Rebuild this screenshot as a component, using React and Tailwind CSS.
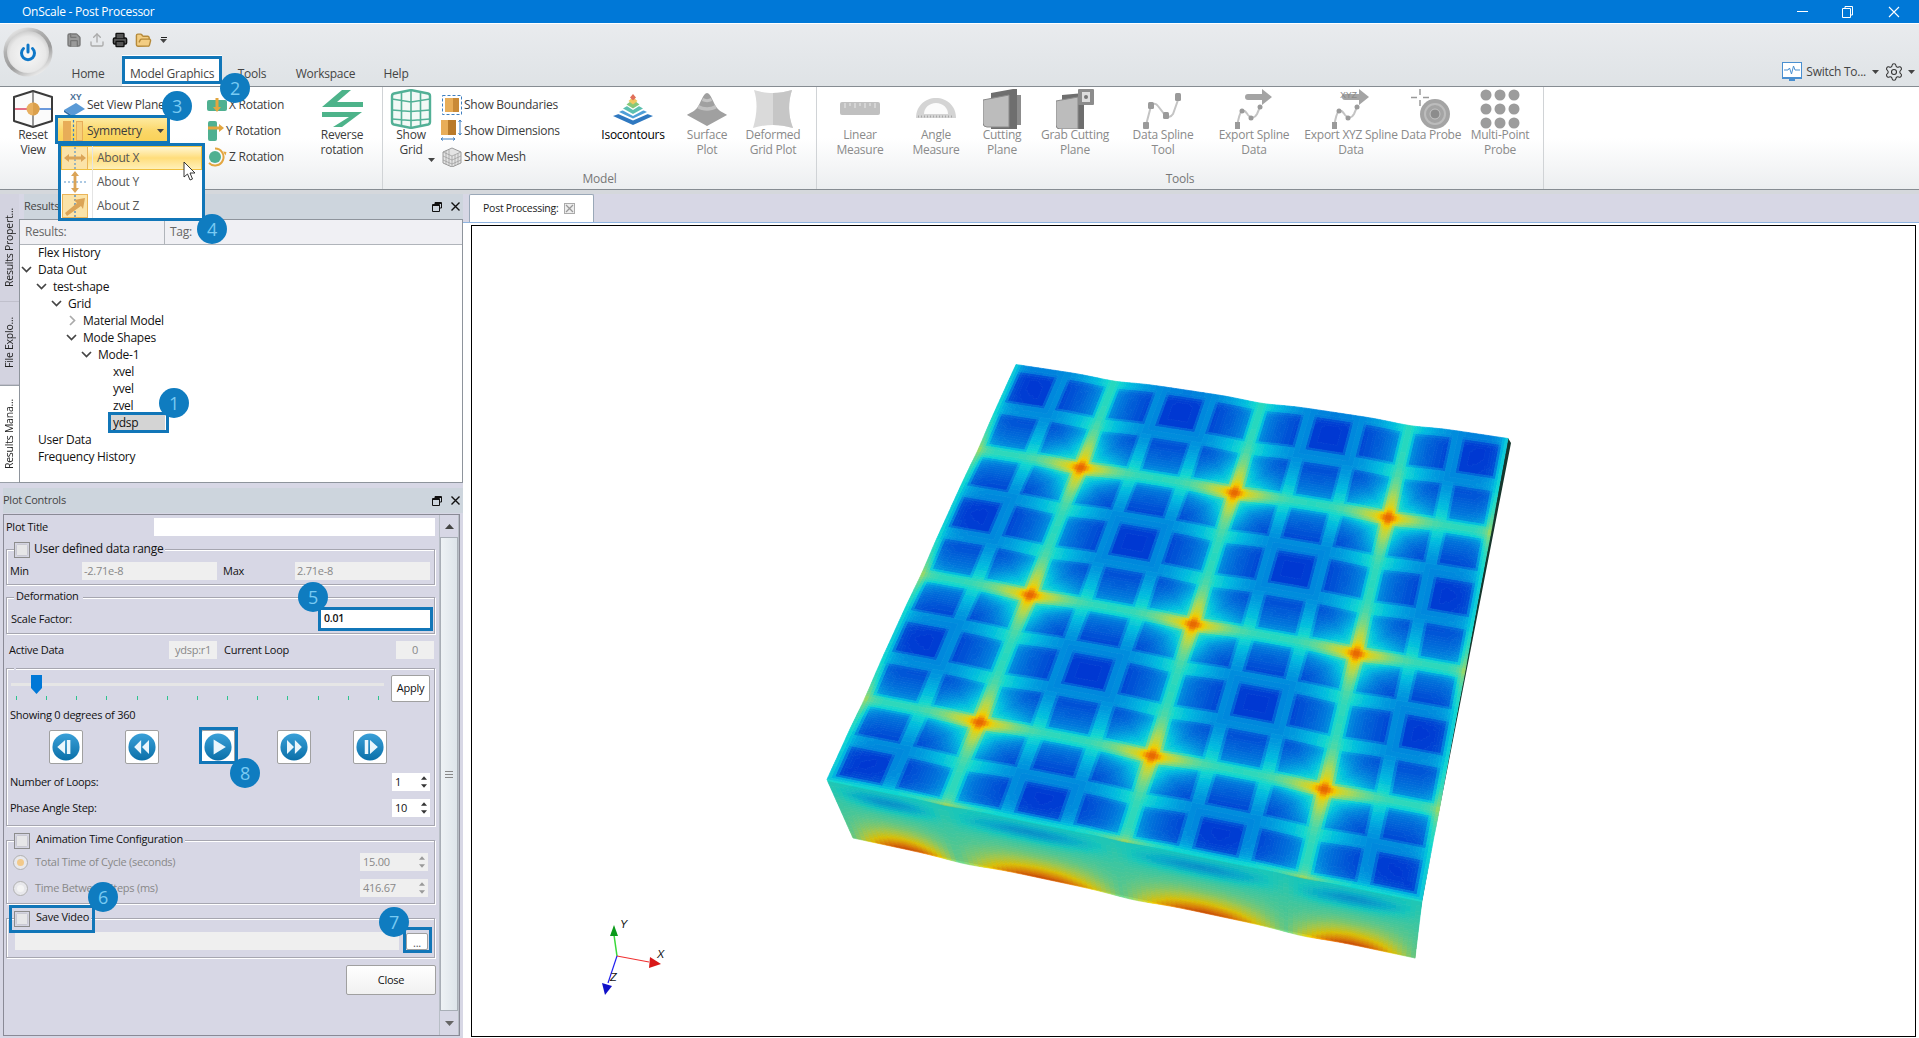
import React, { useMemo } from "react";
import { Save, Upload, Printer, FolderOpen, Settings } from "lucide-react";

/* ---------- small helpers ---------- */

const Caret = ({ className = "" }) => (
  <svg width="7" height="4" viewBox="0 0 7 4" className={className}>
    <path d="M0 0h7L3.500 4z" fill="#444" />
  </svg>
);

/* ---------- ribbon icons ---------- */

const PowerOrb = () => (
  <svg width="50" height="50" viewBox="0 0 50 50">
    <defs>
      <linearGradient id="orbRing" x1="0.1" y1="0" x2="0.7" y2="1">
        <stop offset="0" stopColor="#fafafa" />
        <stop offset="0.35" stopColor="#b0b0b0" />
        <stop offset="0.65" stopColor="#9a9a9a" />
        <stop offset="1" stopColor="#f2f2f2" />
      </linearGradient>
      <radialGradient id="orbFace" cx="0.5" cy="0.55" r="0.6">
        <stop offset="0" stopColor="#f8f8f8" />
        <stop offset="0.7" stopColor="#e8e8e8" />
        <stop offset="1" stopColor="#c4c4c4" />
      </radialGradient>
    </defs>
    <circle cx="25" cy="25" r="24.500" fill="url(#orbRing)" />
    <circle cx="25" cy="25" r="21" fill="url(#orbFace)" />
    <path d="M20.500 21.500a6.500 6.500 0 1 0 9 0" fill="none" stroke="#1078c8" strokeWidth="3" strokeLinecap="round" />
    <path d="M25 18v7" stroke="#1078c8" strokeWidth="3" strokeLinecap="round" />
  </svg>
);

const ResetViewIcon = () => (
  <svg width="42" height="38" viewBox="0 0 42 38">
    <path d="M2 7 21 1l19 6v24l-19 6-19-6z" fill="#fbfbfb" stroke="#3a3a3a" strokeWidth="2" strokeLinejoin="round" />
    <path d="M21 1v36" stroke="#555" strokeWidth="1.200" />
    <path d="M3 19h14" stroke="#e0607a" strokeWidth="1.800" />
    <path d="M25 19h14" stroke="#5a8ed8" strokeWidth="1.800" />
    <circle cx="21" cy="19" r="6.500" fill="#e8b060" />
    <path d="M21 12.500a6.500 6.500 0 0 1 0 13z" fill="#dba04c" />
  </svg>
);

const ViewPlaneIcon = () => (
  <svg width="24" height="26" viewBox="0 0 24 26">
    <text x="7" y="8" fontSize="9" fontWeight="700" fill="#4a6f96" fontFamily="Liberation Sans, sans-serif">XY</text>
    <path d="M1 18 13 11l9 6-12 7z" fill="#5a9ad6" />
    <path d="M1 18l9 6v2l-9-6z" fill="#2f6ca8" />
  </svg>
);

const SymmetryIcon = () => (
  <svg width="20" height="24" viewBox="0 0 20 24">
    <rect x="0" y="2" width="8" height="20" fill="#e8ad58" />
    <rect x="13.500" y="2.500" width="6" height="19" fill="#f6cf7a" stroke="#e8ad58" />
    <path d="M10.500 1v22" stroke="#3a7fc0" strokeWidth="1.200" strokeDasharray="2.500 2" />
  </svg>
);

const ArrowsX = () => (
  <svg width="24" height="22" viewBox="0 0 24 22">
    <path d="M12 0v22" stroke="#5a94c8" strokeWidth="1.200" strokeDasharray="2 2" />
    <path d="M1 11l5-4v2.600h12V7l5 4-5 4v-2.600H6V15z" fill="#dba457" />
  </svg>
);

const ArrowsY = () => (
  <svg width="24" height="22" viewBox="0 0 24 22">
    <path d="M1 11h22" stroke="#5a94c8" strokeWidth="1.200" strokeDasharray="2 2" />
    <path d="M12 0l4 5h-2.600v12H16l-4 5-4-5h2.600V5H8z" fill="#dba457" />
  </svg>
);

const ArrowsZ = () => (
  <svg width="22" height="22" viewBox="0 0 22 22">
    <path d="M11 0v22" stroke="#3a7fc0" strokeWidth="1.200" strokeDasharray="2 2" />
    <path d="M1 18l2 3 14-10 2 3 2-11-11 2 3 3z" fill="#dba457" />
  </svg>
);

const RotX = () => (
  <svg width="20" height="20" viewBox="0 0 20 20">
    <rect x="0" y="5" width="20" height="11" rx="2" fill="#4fb091" />
    <path d="M10 17l-4-5h2.500V3h3v9H14z" fill="#e3a63f" />
  </svg>
);

const RotY = () => (
  <svg width="18" height="22" viewBox="0 0 18 22">
    <rect x="1" y="1" width="9" height="20" rx="2" fill="#4fb091" />
    <path d="M17 8l-5 4V9.500H1v-3h11V4z" fill="#e3a63f" />
  </svg>
);

const RotZ = () => (
  <svg width="20" height="20" viewBox="0 0 20 20">
    <circle cx="8" cy="10" r="6" fill="#4fb091" />
    <path d="M8 1.500a8.500 8.500 0 1 1-6 14.500" fill="none" stroke="#e3a63f" strokeWidth="2" />
    <path d="M16 4.500l3.500.5-1 3.500z" fill="#e3a63f" />
  </svg>
);

const ReverseIcon = () => (
  <svg width="42" height="38" viewBox="0 0 42 38">
    <path d="M21 0h9L16 12h26v5H1z" fill="#4db38a" />
    <path d="M1 22h40L21 37h-9l16-10H1z" fill="#4db38a" />
  </svg>
);

const ShowGridIcon = () => (
  <svg width="42" height="40" viewBox="0 0 42 40">
    <path d="M2 7Q2 5 4 4.500L21 1l17 3.500Q40 5 40 7v26q0 2-2 2.500L21 39 4 35.500Q2 35 2 33z" fill="#f2f9f6" stroke="#52b096" strokeWidth="2.400" />
    <path d="M21 1v38M2 10l19 3 19-3M2 21l19 1.500L40 21M2 30l19 1.500L40 30M11.500 4v32M30.500 4v32" fill="none" stroke="#52b096" strokeWidth="1.600" />
  </svg>
);

const BoundariesIcon = () => (
  <svg width="20" height="20" viewBox="0 0 20 20">
    <rect x="0.500" y="0.500" width="19" height="19" fill="none" stroke="#3f7fc0" strokeDasharray="3 2" />
    <rect x="3" y="3" width="14" height="14" fill="#e8ad58" />
    <rect x="11" y="3" width="6" height="14" fill="#c98a38" />
  </svg>
);

const DimensionsIcon = () => (
  <svg width="22" height="22" viewBox="0 0 22 22">
    <rect x="0" y="0" width="15" height="15" fill="#e8ad58" />
    <rect x="7" y="0" width="8" height="15" fill="#b97a2a" />
    <path d="M19 0v15M17.500 2 19 0l1.500 2M17.500 13l1.500 2 1.500-2M0 19h14M2 17.500 0 19l2 1.500M12 17.500l2 1.500-2 1.500" fill="none" stroke="#3f7fc0" strokeWidth="1" />
  </svg>
);

const MeshIcon = () => (
  <svg width="20" height="20" viewBox="0 0 20 20">
    <path d="M1 5 10 1l9 4v11l-9 4-9-4z" fill="#e4e4e4" stroke="#9a9a9a" />
    <path d="M10 9v11M1 5l9 4 9-4M4 3.800v13.500M7 2.500v16.200M13 7.800v11M16 6.300v11M1 9l9 4 9-4M1 13l9 4 9-4" fill="none" stroke="#9a9a9a" strokeWidth="0.700" />
  </svg>
);

const IsoIcon = () => (
  <svg width="42" height="32" viewBox="0 0 42 32">
    <path d="M1 23 21 16l20 7-20 9z" fill="#2f78c0" />
    <path d="M5 20.500 21 14l16 6.500-16 7z" fill="#fff" />
    <path d="M7 19 21 12.500 35 19l-14 6.500z" fill="#4f9fd8" />
    <path d="M10 17 21 11l11 6-11 6z" fill="#fff" />
    <path d="M11 15.500 21 9.500l10 6-10 5.500z" fill="#5cc0b0" />
    <path d="M14 12.500 21 8l7 4.500-7 4.500z" fill="#fff" />
    <path d="M14.500 11.500 21 6.500l6.500 5-6.500 4z" fill="#86c878" />
    <path d="M16.500 8 21 4l4.500 4-4.500 3.500z" fill="#f0c860" />
    <path d="M18 4.500 21 1l3 3.500-3 3z" fill="#e0705a" />
  </svg>
);

const SurfaceIcon = () => (
  <svg width="42" height="34" viewBox="0 0 42 34">
    <path d="M21 1C17 1 15 11 11 16 8 20 3 21 1 23l20 11 20-11c-2-2-7-3-10-7C27 11 25 1 21 1z" fill="#a0a0a0" />
    <path d="M13 13c5 3 11 3 16 0l2 3c-6 3.500-14 3.500-20 0z" fill="#c0c0c0" />
    <path d="M17 6c3 1.500 5 1.500 8 0l1 3c-3 1.500-7 1.500-10 0z" fill="#c4c4c4" />
  </svg>
);

const DeformedIcon = () => (
  <svg width="40" height="38" viewBox="0 0 40 38">
    <path d="M1 0C8 2 13 3 20 3s12-1 19-3c-4 12-4 25 1 38-7-2-13-3-20-3S7 36 0 38C4 25 5 12 1 0z" fill="#dadada" />
    <path d="M20 3c7 0 12-1 19-3-4 12-4 25 1 38-7-2-13-3-20-3z" fill="#c6c6c6" />
  </svg>
);

const LinearIcon = () => (
  <svg width="40" height="38" viewBox="0 0 40 38">
    <rect x="0" y="12" width="40" height="13" rx="2" fill="#c0c0c0" />
    <path d="M5 13v5M10 13v3M15 13v5M20 13v3M25 13v5M30 13v3M35 13v5" stroke="#dcdcdc" strokeWidth="1.500" />
  </svg>
);

const AngleIcon = () => (
  <svg width="40" height="38" viewBox="0 0 40 38">
    <path d="M0 28C0 16 9 8 20 8s20 8 20 20z" fill="#d4d4d4" />
    <path d="M8 24c0-6 5-11 12-11s12 5 12 11z" fill="#fbfbfb" />
    <path d="M2 26.500h36" stroke="#a8a8a8" strokeWidth="2" strokeDasharray="1 2" />
  </svg>
);

const CuttingIcon = () => (
  <svg width="38" height="40" viewBox="0 0 38 40">
    <path d="M8 4 30 0h4v40H8z" fill="#6e6e6e" />
    <path d="M34 6h4v30h-4z" fill="#8c8c8c" />
    <path d="M0 11 26 6v32H4a4 4 0 0 1-4-4z" fill="#bcbcbc" stroke="#8a8a8a" />
  </svg>
);

const GrabIcon = () => (
  <svg width="38" height="40" viewBox="0 0 38 40">
    <path d="M6 6 28 4v36H6z" fill="#6e6e6e" />
    <path d="M0 12 22 8v32H4a4 4 0 0 1-4-4z" fill="#bcbcbc" stroke="#8a8a8a" />
    <rect x="22" y="0" width="16" height="16" rx="1" fill="#8c8c8c" />
    <rect x="26" y="3" width="8" height="10" fill="#ddd" />
    <circle cx="30" cy="8" r="2" fill="#777" />
  </svg>
);

const SplineIcon = () => (
  <svg width="40" height="40" viewBox="0 0 40 40">
    <path d="M3 36 8 17c2-3 5-3 7 0l7 9c3 3 6 2 8-1l5-14" fill="none" stroke="#c4c4c4" strokeWidth="2" />
    <rect x="0" y="33" width="6" height="7" rx="1" fill="#9a9a9a" />
    <rect x="5" y="13" width="6" height="7" rx="1.500" fill="#9a9a9a" />
    <rect x="20" y="23" width="6" height="7" rx="1.500" fill="#9a9a9a" />
    <rect x="32" y="4" width="6" height="8" rx="1.500" fill="#9a9a9a" />
  </svg>
);

const ExportSplineIcon = ({ xyz }) => (
  <svg width="40" height="40" viewBox="0 0 40 40">
    <path d="M3 36c2-6 2-12 5-14 3-1 4 1 6 4 3 4 7 3 9-1l3-7" fill="none" stroke="#c4c4c4" strokeWidth="2" />
    <rect x="1" y="33" width="5" height="7" fill="#9a9a9a" />
    <circle cx="8" cy="22" r="2.500" fill="#9a9a9a" />
    <circle cx="17" cy="29" r="2.500" fill="#9a9a9a" />
    <circle cx="26" cy="18" r="2.500" fill="#9a9a9a" />
    <path d="M14 5h14V0l10 8-10 8v-5H14a3 3 0 0 1 0-6z" fill="#a4a4a4" />
    {xyz && (
      <text x="9" y="9" fontSize="9" fill="#8a8a8a" fontFamily="Liberation Sans, sans-serif">XYZ</text>
    )}
  </svg>
);

const ProbeIcon = () => (
  <svg width="40" height="40" viewBox="0 0 40 40">
    <path d="M9 0v6M9 11v6M0 8.500h6M12 8.500h6" stroke="#9a9a9a" strokeWidth="1.500" />
    <circle cx="24" cy="25" r="15" fill="#a4a4a4" />
    <circle cx="24" cy="25" r="10" fill="none" stroke="#bcbcbc" strokeWidth="2" />
    <circle cx="24" cy="25" r="5" fill="#8c8c8c" stroke="#c4c4c4" />
  </svg>
);

const MultiPointIcon = () => (
  <svg width="40" height="40" viewBox="0 0 40 40">
    {[6, 20, 34].map((y) =>
      [6, 20, 34].map((x) => <circle key={`${x}-${y}`} cx={x} cy={y} r="5.500" fill="#9c9c9c" />)
    )}
  </svg>
);

/* ---------- ribbon parts ---------- */

const BigButton = ({ icon, lines, width, muted }) => (
  <div className={`${width} flex flex-col items-center pt-[3px] ${muted ? "text-[#8a8a8a]" : "text-[#3c3c3c]"}`}>
    <div className="h-[37px] flex items-center justify-center">{icon}</div>
    <div className="leading-[15px] text-center whitespace-nowrap">
      {lines.map((l) => (
        <div key={l}>{l}</div>
      ))}
    </div>
  </div>
);

const SmallRow = ({ icon, label, iconWidth = "w-[23px]" }) => (
  <div className="h-[26px] flex items-center text-[#3c3c3c] whitespace-nowrap">
    <div className={`${iconWidth} flex justify-center shrink-0`}>{icon}</div>
    <span>{label}</span>
  </div>
);

const Ribbon = () => (
  <div className="h-[103px] flex bg-gradient-to-b from-white via-white to-[#eceef0] border-b border-[#868c92]">
    <div className="w-[383px] flex border-r border-[#d0d3d6] pl-[4px]">
      <BigButton width="w-[58px]" icon={<ResetViewIcon />} lines={["Reset", "View"]} />
      <div className="w-[143px] pt-[5px]">
        <div className="flex items-center">
          <SmallRow icon={<ViewPlaneIcon />} label="Set View Plane" iconWidth="w-[25px]" />
          <Caret className="ml-[3px]" />
        </div>
        <div className="h-[26px] w-[109px] -ml-[4px] flex items-center bg-gradient-to-b from-[#fdeaa0] via-[#fbd768] to-[#f9d054] text-[#3c3c3c]">
          <div className="w-[29px] shrink-0 flex justify-center">
            <SymmetryIcon />
          </div>
          <span>Symmetry</span>
          <Caret className="ml-auto mr-[3px]" />
        </div>
      </div>
      <div className="w-[97px] pt-[5px]">
        <SmallRow icon={<RotX />} label="X Rotation" iconWidth="w-[24px]" />
        <SmallRow icon={<RotY />} label="Y Rotation" iconWidth="w-[21px]" />
        <SmallRow icon={<RotZ />} label="Z Rotation" iconWidth="w-[24px]" />
      </div>
      <BigButton width="w-[80px]" icon={<ReverseIcon />} lines={["Reverse", "rotation"]} />
    </div>

    <div className="w-[434px] flex flex-col border-r border-[#d0d3d6]">
      <div className="flex h-[84px]">
        <div className="relative">
          <BigButton width="w-[56px]" icon={<ShowGridIcon />} lines={["Show", "Grid"]} />
          <Caret className="absolute left-[45px] top-[71px]" />
        </div>
        <div className="w-[160px] pt-[5px]">
          <SmallRow icon={<BoundariesIcon />} label="Show Boundaries" iconWidth="w-[25px]" />
          <SmallRow icon={<DimensionsIcon />} label="Show Dimensions" iconWidth="w-[25px]" />
          <SmallRow icon={<MeshIcon />} label="Show Mesh" iconWidth="w-[25px]" />
        </div>
        <div className="text-black">
          <div className="w-[68px] flex flex-col items-center pt-[3px]">
            <div className="h-[37px] flex items-center">
              <IsoIcon />
            </div>
            <div className="leading-[15px]">Isocontours</div>
          </div>
        </div>
        <BigButton width="w-[80px]" muted icon={<SurfaceIcon />} lines={["Surface", "Plot"]} />
        <BigButton width="w-[52px]" muted icon={<DeformedIcon />} lines={["Deformed", "Grid Plot"]} />
      </div>
      <div className="text-center text-[#777] leading-[15px] mt-[-0.5px]">Model</div>
    </div>

    <div className="w-[727px] flex flex-col border-r border-[#d0d3d6]">
      <div className="flex h-[84px]">
        <BigButton width="w-[86px]" muted icon={<LinearIcon />} lines={["Linear", "Measure"]} />
        <BigButton width="w-[66px]" muted icon={<AngleIcon />} lines={["Angle", "Measure"]} />
        <BigButton width="w-[66px]" muted icon={<CuttingIcon />} lines={["Cutting", "Plane"]} />
        <BigButton width="w-[80px]" muted icon={<GrabIcon />} lines={["Grab Cutting", "Plane"]} />
        <BigButton width="w-[96px]" muted icon={<SplineIcon />} lines={["Data Spline", "Tool"]} />
        <BigButton width="w-[86px]" muted icon={<ExportSplineIcon />} lines={["Export Spline", "Data"]} />
        <BigButton width="w-[108px]" muted icon={<ExportSplineIcon xyz />} lines={["Export XYZ Spline", "Data"]} />
        <BigButton width="w-[52px]" muted icon={<ProbeIcon />} lines={["Data Probe"]} />
        <BigButton width="w-[86px]" muted icon={<MultiPointIcon />} lines={["Multi-Point", "Probe"]} />
      </div>
      <div className="text-center text-[#777] leading-[15px] mt-[-0.5px]">Tools</div>
    </div>
  </div>
);

const RibbonTabs = () => (
  <div className="h-[63px] flex bg-gradient-to-b from-[#e9ebee] to-[#dfe3e6] border-b border-[#868c92] mt-px">
    <div className="w-[63px] pl-[3px] pt-[3px] shrink-0">
      <PowerOrb />
    </div>
    <div className="flex-1 flex flex-col">
      <div className="h-[31px] flex items-center gap-[7px] pl-[3px] pt-[1px]">
        <Save size={16} color="#777" fill="#9a9a9a" />
        <Upload size={16} color="#aaa" />
        <Printer size={16} color="#111" fill="#555" />
        <FolderOpen size={17} color="#b58a3a" fill="#f3cd82" />
        <div className="ml-[1px] flex flex-col items-center gap-px">
          <div className="w-[6px] h-px bg-[#222]" />
          <Caret />
        </div>
      </div>
      <div className="flex-1 flex items-start text-[12px] text-[#444]">
        <div className="w-[50px] mr-[9px] text-center pt-[10px]">Home</div>
        <div className="w-[100px] h-[31px] text-center pt-[10px] bg-white">Model Graphics</div>
        <div className="w-[60px] text-center pt-[10px]">Tools</div>
        <div className="w-[87px] text-center pt-[10px]">Workspace</div>
        <div className="w-[54px] text-center pt-[10px]">Help</div>
        <div className="ml-auto flex items-center pt-[7px] pr-[4px]">
          <svg width="20" height="20" viewBox="0 0 20 20">
            <rect x="0.500" y="0.500" width="19" height="15" fill="#fff" stroke="#4a8fd0" />
            <rect x="0" y="15" width="20" height="2" fill="#4a8fd0" />
            <rect x="7" y="17" width="6" height="2" fill="#4a8fd0" />
            <path d="M2 8h4l1.500-2 2 6 2-8 1.500 4h5" fill="none" stroke="#4a8fd0" />
          </svg>
          <span className="ml-[4px]">Switch To...</span>
          <Caret className="ml-[6px]" />
          <Settings size={20} strokeWidth={1.300} color="#333" className="ml-[5px]" />
          <Caret className="ml-[4px]" />
        </div>
      </div>
    </div>
  </div>
);

const TitleBar = () => (
  <div className="h-[23px] bg-[#0078d7] flex items-center text-white text-[12px] pl-[22px] shrink-0">
    <span>OnScale - Post Processor</span>
    <div className="ml-auto flex items-center">
      <div className="w-[11px] h-px bg-white mr-[34px]" />
      <svg width="11" height="12" viewBox="0 0 11 12" className="mr-[35px]">
        <path d="M3 2.500V.5h7.500v8.500H8.500M.5 2.500h8v9h-8z" fill="none" stroke="#fff" />
      </svg>
      <svg width="12" height="12" viewBox="0 0 12 12" className="mr-[19px]">
        <path d="M1 1l10 10M11 1 1 11" stroke="#fff" strokeWidth="1.100" />
      </svg>
    </div>
  </div>
);

/* ---------- results panel ---------- */

const RestoreIcon = () => (
  <svg width="10" height="10" viewBox="0 0 10 10">
    <path d="M3 2V.5h6.500V6H8M.5 2.500H7.500V9.500H.5zM.5 3.500h7M3 1.500h6.500" fill="none" stroke="#111" />
  </svg>
);

const CloseIcon = () => (
  <svg width="9" height="9" viewBox="0 0 9 9">
    <path d="M.5.5l8 8M8.500.5l-8 8" stroke="#111" strokeWidth="1.400" />
  </svg>
);

const PanelHeader = ({ title }) => (
  <div className="h-[25px] bg-[#cdd5dd] flex items-center text-[11px] text-[#444] pr-[2px]">
    <span className="flex-1">{title}</span>
    <RestoreIcon />
    <div className="w-[19px] flex justify-end pr-[1px]">
      <CloseIcon />
    </div>
  </div>
);

const TREE = [
  { label: "Flex History", depth: 0 },
  { label: "Data Out", depth: 0, chev: "down" },
  { label: "test-shape", depth: 1, chev: "down" },
  { label: "Grid", depth: 2, chev: "down" },
  { label: "Material Model", depth: 3, chev: "right" },
  { label: "Mode Shapes", depth: 3, chev: "down" },
  { label: "Mode-1", depth: 4, chev: "down" },
  { label: "xvel", depth: 5 },
  { label: "yvel", depth: 5 },
  { label: "zvel", depth: 5 },
  { label: "ydsp", depth: 5, selected: true },
  { label: "User Data", depth: 0 },
  { label: "Frequency History", depth: 0 },
];

const TreeRow = ({ label, depth, chev, selected }) => (
  <div className="h-[17px] flex items-center text-[12px] text-[#111]" style={{ paddingLeft: depth * 15 + 1 }}>
    <div className="w-[17px] shrink-0 flex justify-start">
      {chev === "down" && (
        <svg width="11" height="7" viewBox="0 0 11 7">
          <path d="M1 1l4.500 4.500L10 1" fill="none" stroke="#444" strokeWidth="1.700" />
        </svg>
      )}
      {chev === "right" && (
        <svg width="11" height="11" viewBox="0 0 11 11" className="ml-[1px]">
          <path d="M3 1l4.500 4.500L3 10" fill="none" stroke="#aaa" strokeWidth="1.700" />
        </svg>
      )}
    </div>
    <span className={selected ? "bg-[#d4d4d4] w-[54px] -ml-[2px] pl-[2px]" : ""}>{label}</span>
  </div>
);

const VTab = ({ label, height, active }) => (
  <div className={`${height} flex items-center justify-center ${active ? "bg-white border-y border-[#9aa0a8]" : "bg-[#d3d3e0] border-b border-[#c0c0cc]"}`}>
    <span className="[writing-mode:vertical-rl] rotate-180 text-[10.500px] text-[#222] whitespace-nowrap">{label}</span>
  </div>
);

const ResultsPanel = () => (
  <div className="h-[289px] flex">
    <div className="w-[19px] flex flex-col shrink-0">
      <VTab label="Results Propert..." height="h-[108px]" />
      <VTab label="File Explo..." height="h-[83px]" />
      <VTab label="Results Mana..." height="h-[98px]" active />
    </div>
    <div className="w-[444px] flex flex-col">
      <div className="pl-[5px]">
        <PanelHeader title="Results" />
      </div>
      <div className="flex-1 border border-[#8e949c] bg-white flex flex-col">
        <div className="h-[25px] flex bg-[#f0f0f4] border-b border-[#b0b4ba] text-[12px] text-[#666]">
          <div className="w-[145px] border-r border-[#b0b4ba] pl-[5px] flex items-center">Results:</div>
          <div className="pl-[5px] flex items-center">Tag:</div>
        </div>
        <div className="-mt-[1px]">
          {TREE.map((row) => (
            <TreeRow key={row.label} {...row} />
          ))}
        </div>
      </div>
    </div>
  </div>
);

/* ---------- plot controls ---------- */

const CheckBox = () => (
  <div className="w-[16px] h-[16px] border border-[#8c8c8c] bg-[#d7d7e5] flex items-center justify-center shrink-0">
    <div className="w-[10px] h-[10px] bg-[#e6e6e8] shadow-[0_0_2px_#aaa]" />
  </div>
);

const Radio = ({ on }) => (
  <div className="w-[15px] h-[15px] rounded-full border border-[#b0b0b0] bg-[#e8e8ec] flex items-center justify-center shrink-0">
    <div className={`w-[7px] h-[7px] rounded-full ${on ? "bg-[#f2c98a]" : "bg-[#f4f4f4]"}`} />
  </div>
);

const Group = ({ className, legend, children }) => (
  <div className={`relative ml-[2px] w-[429px] border border-[#a6a6b0] shadow-[1px_1px_0_#fff,inset_1px_1px_0_#fff] ${className}`}>
    <div className="absolute -top-[8px] left-[7px] flex items-center bg-[#d7d7e5] text-[11px] text-[#111] pr-[2px] h-[16px]">{legend}</div>
    {children}
  </div>
);

const Field = ({ className, children }) => (
  <div className={`h-[18px] bg-[#efefef] flex items-center text-[11px] text-[#888] ${className}`}>{children}</div>
);

const Spin = ({ value, disabled, className }) => (
  <div className={`h-[18px] flex items-center justify-between text-[11px] pl-[3px] pr-[3px] ${disabled ? "bg-[#efefef] text-[#888]" : "bg-white text-[#111]"} ${className}`}>
    <span>{value}</span>
    <div className="flex flex-col gap-[4px]">
      <svg width="6" height="4" viewBox="0 0 7 4"><path d="M3.500 0 7 4H0z" fill={disabled ? "#999" : "#333"} /></svg>
      <svg width="6" height="4" viewBox="0 0 7 4"><path d="M0 0h7L3.500 4z" fill={disabled ? "#999" : "#333"} /></svg>
    </div>
  </div>
);

const PLAY_ICONS = {
  first: "M15 8v16l-9-8zM17 8h4v16h-4z",
  back: "M15 8v16l-8-8zM24 8v16l-8-8z",
  play: "M11 7.500v17l14-8.500z",
  forward: "M8 8v16l8-8zM17 8v16l8-8z",
  last: "M10 8h4v16h-4zM16 8v16l9-8z",
};

const PlayButton = ({ kind, className = "" }) => (
  <div className={`w-[34px] h-[34px] rounded-[2px] border border-[#a0a0a0] bg-white flex items-center justify-center ${className}`}>
    <svg width="28" height="28" viewBox="0 0 32 32">
      <defs>
        <linearGradient id={`pb-${kind}`} x1="0" y1="0" x2="0" y2="1">
          <stop offset="0" stopColor="#3aa0d8" />
          <stop offset="1" stopColor="#0a6fa8" />
        </linearGradient>
      </defs>
      <circle cx="16" cy="16" r="15.500" fill={`url(#pb-${kind})`} />
      <path d={PLAY_ICONS[kind]} fill="#eaf6fc" />
    </svg>
  </div>
);

const TICKS = Array.from({ length: 13 }, (_, i) => i);

const PlotControls = () => (
  <div className="flex-1 ml-[3px] mr-[3px] mb-[2px] mt-px border border-[#8a8a96] flex">
    <div className="w-[435px] text-[11px] text-[#111]">
      <div className="mt-[3px] h-[18px] flex items-center pl-[2px]">
        <span className="w-[148px]">Plot Title</span>
        <div className="w-[281px] h-[18px] bg-white" />
      </div>

      <Group className="mt-[13px] h-[36px]" legend={<><CheckBox /><span className="ml-[4px] text-[12px] -mt-[2px]">User defined data range</span></>}>
        <div className="pt-[12px] pl-[3px] flex items-center">
          <span className="w-[72px]">Min</span>
          <Field className="w-[135px] pl-[2px]">-2.71e-8</Field>
          <span className="ml-[6px] w-[72px]">Max</span>
          <Field className="w-[135px] pl-[2px]">2.71e-8</Field>
        </div>
      </Group>

      <Group className="mt-[12px] h-[37px]" legend={<span className="px-[2px] -mt-[4px]">Deformation</span>}>
        <div className="pt-[9px] pl-[4px] flex items-center">
          <span className="flex-1">Scale Factor:</span>
          <div className="w-[115px] h-[24px] border-[3px] border-[#1176b8] bg-white flex items-center pl-[3px] mr-[1px] font-semibold text-[10.500px]">0.01</div>
        </div>
      </Group>

      <div className="mt-[7px] h-[18px] flex items-center pl-[5px]">
        <span className="w-[160px]">Active Data</span>
        <Field className="w-[48px] justify-center">ydsp:r1</Field>
        <span className="ml-[7px] w-[172px]">Current Loop</span>
        <Field className="w-[38px] justify-center">0</Field>
      </div>

      <Group className="mt-[9px] h-[158px]" legend={null}>
        <div className="pt-[6px] pl-[4px] flex">
          <div className="relative w-[373px] h-[27px]">
            <div className="mt-[8px] h-[3px] bg-[#e6e6e6]" />
            <svg width="11" height="19" viewBox="0 0 11 19" className="absolute left-[20px] top-0">
              <path d="M0 0h11v13l-5.500 6L0 13z" fill="#0078d7" />
            </svg>
            <div className="mt-[10px] px-[5px] flex justify-between">
              {TICKS.map((t) => (
                <div key={t} className="w-px h-[4px] bg-[#2fc28f]" />
              ))}
            </div>
          </div>
          <div className="ml-[7px] w-[39px] h-[27px] rounded-[2px] border border-[#a0a0a0] bg-white flex items-center justify-center">Apply</div>
        </div>
        <div className="mt-[6px] pl-[3px] leading-[14px]">Showing 0 degrees of 360</div>
        <div className="mt-[8px] pl-[42px] flex gap-[42px]">
          <PlayButton kind="first" />
          <PlayButton kind="back" />
          <PlayButton kind="play" />
          <PlayButton kind="forward" />
          <PlayButton kind="last" />
        </div>
        <div className="mt-[9px] pl-[3px] flex items-center">
          <span className="w-[382px]">Number of Loops:</span>
          <Spin value="1" className="w-[38px]" />
        </div>
        <div className="mt-[8px] pl-[3px] flex items-center">
          <span className="w-[382px]">Phase Angle Step:</span>
          <Spin value="10" className="w-[38px]" />
        </div>
      </Group>

      <Group className="mt-[14px] h-[64px]" legend={<><CheckBox /><span className="ml-[6px] -mt-[3px]">Animation Time Configuration</span></>}>
        <div className="pt-[12px] pl-[6px] flex items-center text-[#888]">
          <Radio on />
          <span className="ml-[7px] w-[325px]">Total Time of Cycle (seconds)</span>
          <Spin value="15.00" disabled className="w-[68px]" />
        </div>
        <div className="mt-[8px] pl-[6px] flex items-center text-[#888]">
          <Radio />
          <span className="ml-[7px] w-[325px]">Time Between Steps (ms)</span>
          <Spin value="416.67" disabled className="w-[68px]" />
        </div>
      </Group>

      <Group className="mt-[14px] h-[40px]" legend={<><CheckBox /><span className="ml-[6px] -mt-[3px]">Save Video</span></>}>
        <div className="pt-[13px] pl-[8px] flex items-center">
          <Field className="w-[384px]" />
          <div className="ml-[7px] w-[22px] h-[17px] rounded-[2px] border border-[#a0a0a0] bg-white flex items-end justify-center leading-[12px] text-[#555]">...</div>
        </div>
      </Group>

      <div className="mt-[7px] ml-[342px] w-[90px] h-[30px] rounded-[2px] border border-[#a0a0a0] bg-gradient-to-b from-white to-[#f1f1f1] flex items-center justify-center">Close</div>
    </div>

    <div className="w-[20px] ml-[1px] flex flex-col bg-[#e2e8ee] border-x border-[#b8bec6]">
      <div className="h-[22px] flex items-center justify-center bg-[#d7d7e5]">
        <svg width="9" height="5" viewBox="0 0 9 5"><path d="M4.500 0 9 5H0z" fill="#444" /></svg>
      </div>
      <div className="flex-1 bg-gradient-to-r from-[#eef2f5] to-[#dde4ea] border border-[#a8aeb6] flex items-center justify-center">
        <div className="flex flex-col gap-[2px]">
          <div className="w-[8px] h-px bg-[#888]" />
          <div className="w-[8px] h-px bg-[#888]" />
          <div className="w-[8px] h-px bg-[#888]" />
        </div>
      </div>
      <div className="h-[24px] flex items-center justify-center bg-[#d7d7e5]">
        <svg width="9" height="5" viewBox="0 0 9 5"><path d="M0 0h9L4.500 5z" fill="#666" /></svg>
      </div>
    </div>
  </div>
);

/* ---------- 3d plot ---------- */

const STOPS = [
  [0, [0, 12, 190]],
  [0.12, [0, 44, 208]],
  [0.25, [0, 120, 220]],
  [0.35, [0, 184, 224]],
  [0.42, [16, 216, 208]],
  [0.52, [96, 216, 152]],
  [0.62, [176, 216, 80]],
  [0.72, [240, 208, 0]],
  [0.85, [240, 128, 0]],
  [1, [208, 48, 0]],
];

const jet = (t) => {
  for (let i = 1; i < STOPS.length; i++) {
    if (t <= STOPS[i][0]) {
      const [a, ca] = STOPS[i - 1];
      const [b, cb] = STOPS[i];
      const k = (t - a) / (b - a);
      const c = ca.map((x, j) => Math.round(x + (cb[j] - x) * k));
      return `rgb(${c[0]},${c[1]},${c[2]})`;
    }
  }
  return "rgb(208,48,0)";
};

const HOT = [0.2, 0.5, 0.8];
const nearest = (x) => Math.min(...HOT.map((h) => Math.abs(x - h)));
const clamp = (x) => Math.max(0, Math.min(1, x));

// top face: smooth field in the grooves, darker raised cells, orange crossings
const topValue = (u, v) => {
  const du = nearest(u);
  const dv = nearest(v);
  const d = Math.min(du, dv);
  const r2 = du * du + dv * dv;
  const ridge = 0.25 + 0.21 * Math.exp(-d / 0.05) + 0.18 * Math.exp(-r2 / 0.004);
  const fu = u * 10 - Math.floor(u * 10);
  const fv = v * 10 - Math.floor(v * 10);
  const edge = Math.min(fu, 1 - fu, fv, 1 - fv);
  const cell = 0.13 + 1.0 * (ridge - 0.25);
  const rim = 0.1 * Math.exp(-Math.max(0, fv - 0.13) / 0.05);
  const m = clamp((edge - 0.11) / 0.03);
  let val = ridge * (1 - m) + (cell + rim) * m;
  if (d < 0.02) val += 0.08 * (1 - d / 0.02) * Math.exp(-r2 / 0.006);
  val += 0.2 * Math.exp(-r2 / 0.00022);
  const border = Math.min(u, 1 - v, 1 - u);
  val += 0.16 * Math.exp(-border / 0.012);
  return clamp(val);
};

const frontValue = (u, t) => {
  const edges = [0, 0.19, 0.48, 0.77, 1];
  let x = 0;
  for (let i = 0; i < 4; i++) {
    if (u >= edges[i] && u <= edges[i + 1]) x = (u - edges[i]) / (edges[i + 1] - edges[i]);
  }
  const bump = Math.sin(Math.PI * x) ** 1.2;
  let val = 0.43 - 0.14 * bump * Math.exp(-(((t - 0.22) / 0.14) ** 2));
  val += 0.1 * t * (1 - 0.4 * bump);
  val += 0.46 * t ** 3.5 * bump;
  return clamp(val);
};

const bilinear = (a, b, c, d, u, v) => [
  a[0] + (b[0] - a[0]) * u + (d[0] - a[0]) * v + (a[0] - b[0] + c[0] - d[0]) * u * v,
  a[1] + (b[1] - a[1]) * u + (d[1] - a[1]) * v + (a[1] - b[1] + c[1] - d[1]) * u * v,
];

const wobble = (u, v) =>
  1.8 * (Math.exp(-((nearest(u) / 0.05) ** 2)) + Math.exp(-((nearest(v) / 0.05) ** 2)));

const useSurface = () =>
  useMemo(() => {
    const A = [1016, 365];
    const B = [1508, 439];
    const C = [1422, 901];
    const D = [827, 780];
    const E = [853, 837];
    const F = [1415, 957];
    const buckets = {};
    const add = (val, pts) => {
      const key = Math.round(val * 120);
      const seg = `M${pts.map((p) => `${p[0].toFixed(1)} ${p[1].toFixed(1)}`).join("L")}Z`;
      buckets[key] = (buckets[key] || "") + seg;
    };
    const top = (u, v) => {
      const p = bilinear(A, B, C, D, u, v);
      return [p[0], p[1] + wobble(u, v) - 1.5];
    };
    const N = 200;
    for (let i = 0; i < N; i++) {
      for (let j = 0; j < N; j++) {
        const u = i / N;
        const v = j / N;
        const s = 1 / N;
        add(topValue(u + s / 2, v + s / 2), [top(u, v), top(u + s, v), top(u + s, v + s), top(u, v + s)]);
      }
    }
    const front = (u, t) => {
      const p = top(u, 1);
      const q = [E[0] + (F[0] - E[0]) * u, E[1] + (F[1] - E[1]) * u + wobble(u, 0.35)];
      return [p[0] + (q[0] - p[0]) * t, p[1] + (q[1] - p[1]) * t];
    };
    const M = 120;
    const H = 30;
    for (let i = 0; i < M; i++) {
      for (let j = 0; j < H; j++) {
        const u = i / M;
        const t = j / H;
        add(frontValue(u + 0.5 / M, t + 0.5 / H), [
          front(u, t),
          front(u + 1 / M, t),
          front(u + 1 / M, t + 1 / H),
          front(u, t + 1 / H),
        ]);
      }
    }
    return Object.entries(buckets).map(([k, d]) => ({ k, d, fill: jet(Number(k) / 120) }));
  }, []);

const PlotView = () => {
  const surface = useSurface();
  return (
    <svg width="1443" height="810" viewBox="472 225 1443 810" className="block">
      <defs>
        <filter id="soften" x="-5%" y="-5%" width="110%" height="110%">
          <feGaussianBlur stdDeviation="0.7" />
        </filter>
      </defs>
      <path d="M1508 437 1511 442 1421 903 1415 958 1414 950 1422 901z" fill="#16362c" />
      <g filter="url(#soften)">
        {surface.map((s) => (
          <path key={s.k} d={s.d} fill={s.fill} stroke={s.fill} strokeWidth="0.700" />
        ))}
      </g>
      <path d="M827 780 1422 901 1415 957 853 837z" fill="#3a4a30" opacity="0.130" />
      <path d="M617 955 614 934" stroke="#38d838" strokeWidth="1.500" />
      <path d="M614 924l-4 11h8z" fill="#0a9a1a" />
      <path d="M617 955l32 6" stroke="#f03030" strokeWidth="1.200" />
      <path d="M661 963l-11-7-1 11z" fill="#d81818" />
      <path d="M617 955l-9 27" stroke="#2020f0" strokeWidth="1.200" />
      <path d="M605 994l-3-12 10 3z" fill="#1010c8" />
      <g fontSize="11" fontStyle="italic" fill="#111" fontFamily="Liberation Sans, sans-serif">
        <text x="620" y="927">Y</text>
        <text x="657" y="957">X</text>
        <text x="610" y="980">Z</text>
      </g>
    </svg>
  );
};

const ViewerPane = () => (
  <div className="flex-1 flex flex-col">
    <div className="h-[29px] flex items-end pl-[6px] border-b border-[#8fb4e0]">
      <div className="w-[125px] h-[28px] bg-white border border-b-0 border-[#9aa8b8] rounded-t-[2px] flex items-center pl-[13px] text-[10.500px] text-[#222]">
        <span>Post Processing:</span>
        <svg width="11" height="11" viewBox="0 0 11 11" className="ml-[5px]">
          <rect x="0.500" y="0.500" width="10" height="10" fill="#eee" stroke="#aaa" />
          <path d="M2 2l7 7M9 2 2 9" stroke="#999" strokeWidth="1.300" />
        </svg>
      </div>
    </div>
    <div className="flex-1 bg-white pt-[2px] pl-[8px] pr-[3px] pb-[2px]">
      <div className="w-[1445px] h-[812px] border border-black">
        <PlotView />
      </div>
    </div>
  </div>
);

/* ---------- annotations over the picture ---------- */

const Badge = ({ n, className }) => (
  <div className={`absolute w-[30px] h-[30px] rounded-full bg-[#0f7cc0] text-[#79caf2] text-[18px] flex items-center justify-center ${className}`}>{n}</div>
);

const Mark = ({ className }) => <div className={`absolute border-[3px] border-[#1176b8] ${className}`} />;

const SymmetryMenu = () => (
  <div className="absolute left-[58px] top-[143px] w-[147px] h-[78px] border-[3px] border-[#1176b8] bg-white flex flex-col text-[12px] text-[#555]">
    <div className="absolute left-[31px] top-0 bottom-0 w-px bg-[#e4e4e4]" />
    <div className="h-[24px] flex items-center border border-[#f0c040] bg-gradient-to-b from-[#fff6d0] via-[#ffdd7a] to-[#fff0b8]">
      <div className="w-[26px] h-full bg-[#fbe3a8] border-r border-[#eab458] flex items-center justify-center">
        <ArrowsX />
      </div>
      <span className="ml-[9px]">About X</span>
    </div>
    <div className="h-[24px] flex items-center pl-[1px]">
      <div className="w-[26px] flex justify-center"><ArrowsY /></div>
      <span className="ml-[9px]">About Y</span>
    </div>
    <div className="h-[24px] flex items-center pl-[1px]">
      <div className="w-[26px] h-[24px] bg-[#fbe3a8] border border-[#eab458] flex items-center justify-center"><ArrowsZ /></div>
      <span className="ml-[9px]">About Z</span>
    </div>
  </div>
);

const Annotations = () => (
  <>
    <SymmetryMenu />
    <Mark className="left-[122px] top-[56px] w-[100px] h-[28px]" />
    <Mark className="left-[55px] top-[115px] w-[115px] h-[29px]" />
    <Mark className="left-[108px] top-[412px] w-[61px] h-[21px]" />
    <Mark className="left-[199px] top-[727px] w-[39px] h-[37px]" />
    <Mark className="left-[9px] top-[905px] w-[86px] h-[28px]" />
    <Mark className="left-[403px] top-[927px] w-[29px] h-[26px]" />
    <svg width="14" height="20" viewBox="0 0 14 20" className="absolute left-[183px] top-[161px]">
      <path d="M1 1v15l3.500-3 2.500 6 2.500-1-2.500-6h5z" fill="#fff" stroke="#222" strokeWidth="0.900" />
    </svg>
    <Badge n="1" className="left-[159px] top-[388px]" />
    <Badge n="2" className="left-[220px] top-[73px]" />
    <Badge n="3" className="left-[162px] top-[91px]" />
    <Badge n="4" className="left-[197px] top-[214px]" />
    <Badge n="5" className="left-[298px] top-[582px]" />
    <Badge n="6" className="left-[88px] top-[882px]" />
    <Badge n="7" className="left-[379px] top-[907px]" />
    <Badge n="8" className="left-[230px] top-[758px]" />
  </>
);

export default function App() {
  return (
    <div className="relative w-[1919px] h-[1038px] overflow-hidden flex flex-col bg-white font-['Open_Sans',sans-serif] text-[12px] tracking-[-0.25px]">
      <TitleBar />
      <RibbonTabs />
      <Ribbon />
      <div className="h-[4px] bg-[#d5d8dc]" />
      <div className="flex-1 flex bg-[#d7d7e5] min-h-0">
        <div className="w-[463px] flex flex-col shrink-0">
          <ResultsPanel />
          <div className="h-[5px]" />
          <div className="pl-[3px]">
            <PanelHeader title="Plot Controls" />
          </div>
          <PlotControls />
        </div>
        <ViewerPane />
      </div>
      <Annotations />
    </div>
  );
}
